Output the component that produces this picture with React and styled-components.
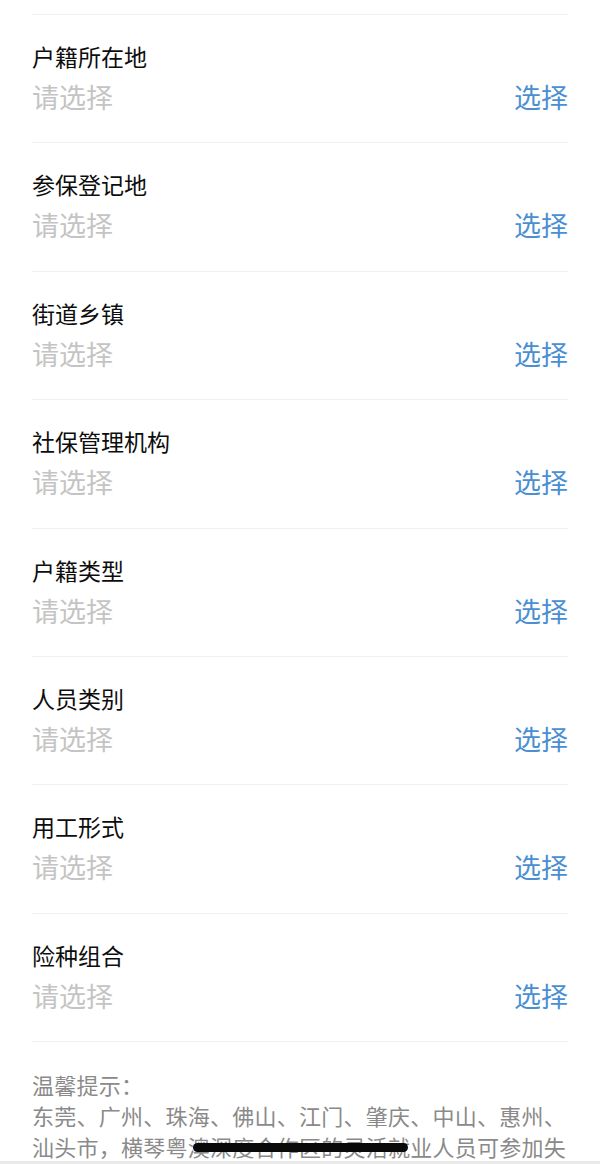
import React from "react";
import styled, { createGlobalStyle } from "styled-components";

const Global = createGlobalStyle`
  html, body { margin: 0; padding: 0; background: #fff; }
  body { font-family: "Noto Sans CJK SC", "Noto Sans", sans-serif; }
`;

const Page = styled.div`
  position: relative;
  width: 600px;
  height: 1164px;
  overflow: hidden;
  background: #fff;
  padding-top: 14px;
  box-sizing: border-box;
`;

const List = styled.div`
  padding: 0 32px;
`;

const Row = styled.div`
  height: 128.375px;
  box-sizing: border-box;
  border-top: 1px solid #efefef;
  padding-top: 25px;
  display: flex;
  flex-direction: column;
`;

const Label = styled.div`
  font-size: 23px;
  line-height: 32px;
  color: #0d0d0d;
`;

const ValueLine = styled.div`
  margin-top: 5px;
  display: flex;
  justify-content: space-between;
  align-items: center;
  font-size: 27px;
  line-height: 40px;
`;

const Placeholder = styled.span`
  color: #c4c4c4;
`;

const Action = styled.span`
  color: #4a8fd2;
`;

const Tip = styled.div`
  border-top: 1px solid #efefef;
  padding-top: 27px;
  font-size: 22px;
  line-height: 31px;
  letter-spacing: 0.25px;
  color: #8a8a8a;
`;

const BottomEdge = styled.div`
  position: absolute;
  left: 0;
  right: 0;
  bottom: 0;
  height: 3px;
  background: #e9e9e9;
`;

const HomeIndicator = styled.div`
  position: absolute;
  left: 193px;
  width: 215px;
  top: 1143px;
  height: 9px;
  border-radius: 5px;
  background: #0a0a0a;
`;

const fields = [
  "户籍所在地",
  "参保登记地",
  "街道乡镇",
  "社保管理机构",
  "户籍类型",
  "人员类别",
  "用工形式",
  "险种组合",
];

export default function App() {
  return (
    <>
      <Global />
      <Page>
        <List>
          {fields.map((f) => (
            <Row key={f}>
              <Label>{f}</Label>
              <ValueLine>
                <Placeholder>请选择</Placeholder>
                <Action>选择</Action>
              </ValueLine>
            </Row>
          ))}
          <Tip>
            温馨提示：
            <br />
            东莞、广州、珠海、佛山、江门、肇庆、中山、惠州、汕头市，横琴粤澳深度合作区的灵活就业人员可参加失业保险。
          </Tip>
        </List>
        <BottomEdge />
        <HomeIndicator />
      </Page>
    </>
  );
}
